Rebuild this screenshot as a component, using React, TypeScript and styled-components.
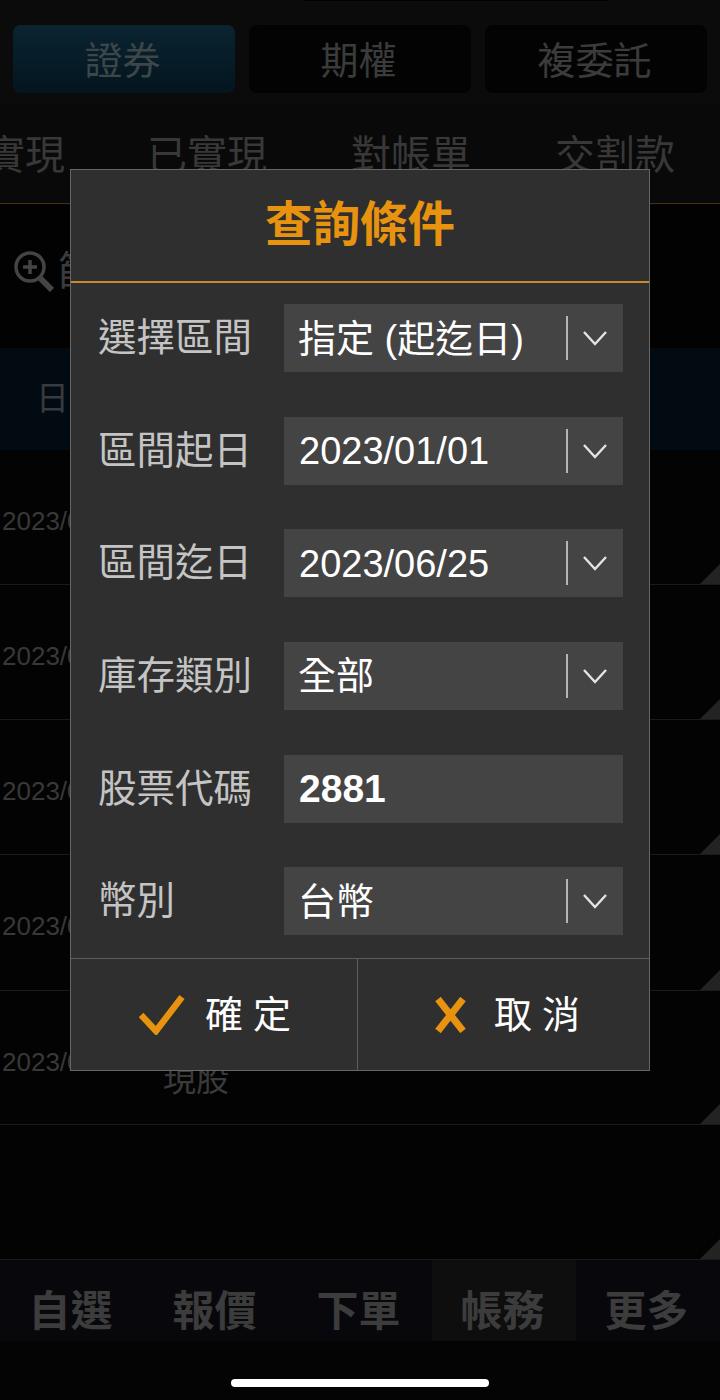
import React from "react";
import styled, { createGlobalStyle } from "styled-components";

const cjk = `"Liberation Sans", "Noto Sans CJK TC", sans-serif`;

const GlobalStyle = createGlobalStyle`
  html, body {
    margin: 0;
    padding: 0;
    background: #050505;
  }
  * { box-sizing: border-box; }
`;

const Page = styled.div`
  position: relative;
  width: 720px;
  height: 1400px;
  overflow: hidden;
  background: #040405;
  font-family: ${cjk};
`;

const TopBar = styled.div`
  height: 105px;
  background: #0b0b0b;
  padding: 25px 13px 0;
  display: grid;
  grid-template-columns: repeat(3, 222px);
  column-gap: 14px;
  align-items: start;
`;

const Notch = styled.div`
  position: absolute;
  top: 0;
  left: 303px;
  width: 305px;
  height: 1px;
  background: #020202;
`;

const Segment = styled.div<{ $active?: boolean }>`
  height: 68px;
  border-radius: 8px;
  padding-right: 3px;
  background: ${(p) => (p.$active ? "linear-gradient(#0a2431, #03151f)" : "#030303")};
  color: ${(p) => (p.$active ? "#3d4649" : "#3b3b3b")};
  font-size: 38px;
  line-height: 72px;
  text-align: center;
`;

const SubTabs = styled.div`
  height: 99px;
  background: #090909;
  border-bottom: 1px solid #46300f;
  display: flex;
  gap: 84px;
  overflow: hidden;
  white-space: nowrap;
`;

const SubTab = styled.div<{ $first?: boolean }>`
  color: #383838;
  font-size: 40px;
  line-height: 100px;
  flex: none;
  margin-left: ${(p) => (p.$first ? "-15px" : "0")};
  margin-right: ${(p) => (p.$first ? "-2px" : "0")};
`;

const SearchRow = styled.div`
  height: 144px;
  background: #020202;
  display: flex;
  align-items: flex-start;
  padding: 46px 0 0 14px;
  gap: 4px;
  color: #3b3b3b;
  font-size: 40px;
  line-height: 42px;
`;

const TableHead = styled.div`
  height: 102px;
  background: #020b12;
  color: #363b3f;
  font-size: 33px;
  line-height: 102px;
  padding-left: 36px;
`;

const Row = styled.div<{ $h?: number }>`
  position: relative;
  height: ${(p) => p.$h ?? 135}px;
  background: #030303;
  border-bottom: 1px solid #1a1a1a;
  display: grid;
  grid-template-columns: 161px 1fr;
  padding: 55px 0 0 2px;
  &::after {
    content: "";
    position: absolute;
    right: 0;
    bottom: 0;
    width: 20px;
    height: 20px;
    background: #232323;
    clip-path: polygon(100% 0, 100% 100%, 0 100%);
  }
`;

const DateCell = styled.div`
  color: #383838;
  font-size: 26px;
  line-height: 32px;
`;

const KindCell = styled.div`
  color: #3a3a3a;
  font-size: 33px;
  line-height: 36px;
  padding-top: 16px;
`;

const BottomNav = styled.div`
  height: 81px;
  background: #08080c;
  display: grid;
  grid-template-columns: repeat(5, 144px);
`;

const NavItem = styled.div<{ $active?: boolean }>`
  background: ${(p) => (p.$active ? "#0e0e0f" : "transparent")};
  color: #3c3c3c;
  font-size: 42px;
  font-weight: 700;
  line-height: 104px;
  height: 81px;
  padding-right: 3px;
  text-align: center;
  white-space: nowrap;
`;

const HomeBar = styled.div`
  position: absolute;
  left: 231px;
  top: 1379px;
  width: 258px;
  height: 8px;
  border-radius: 4px;
  background: #ffffff;
`;

const Dialog = styled.div`
  position: absolute;
  left: 70px;
  top: 169px;
  width: 580px;
  height: 902px;
  background: #2f2f2f;
  border: 1.5px solid #666666;
  display: flex;
  flex-direction: column;
`;

const DialogTitle = styled.div`
  height: 113px;
  flex: none;
  border-bottom: 2px solid #c98a2c;
  color: #e8930f;
  font-size: 47.5px;
  font-weight: 700;
  line-height: 110px;
  text-align: center;
`;

const Form = styled.div`
  flex: 1;
  padding: 21.2px 26px 0 27px;
  display: grid;
  grid-auto-rows: 68px;
  row-gap: 44.6px;
`;

const FormRow = styled.div`
  display: grid;
  grid-template-columns: 186px 339px;
  align-items: center;
`;

const Label = styled.div`
  color: #c4c4c4;
  font-size: 38.5px;
  line-height: 68px;
  white-space: nowrap;
`;

const Field = styled.div`
  height: 68px;
  background: #444444;
  display: flex;
  align-items: center;
  padding-left: 15px;
  color: #ffffff;
  font-size: 38px;
`;

const FieldValue = styled.div<{ $bold?: boolean; $shift: number }>`
  flex: 1;
  margin-top: ${(p) => p.$shift}px;
  margin-left: ${(p) => (p.$shift < 0 ? -1 : 0)}px;
  font-weight: ${(p) => (p.$bold ? 700 : 400)};
  font-size: ${(p) => (p.$bold ? 39 : 38)}px;
  white-space: nowrap;
`;

const Caret = styled.div`
  width: 57px;
  height: 44px;
  flex: none;
  border-left: 2px solid #b5b5b5;
  padding-right: 2px;
  display: flex;
  align-items: center;
  justify-content: center;
`;

const Footer = styled.div`
  height: 112px;
  flex: none;
  border-top: 1.5px solid #5c5c5c;
  display: grid;
  grid-template-columns: 287px 1fr;
`;

const FooterButton = styled.div<{ $divider?: boolean; $gap: number; $shift: number }>`
  display: flex;
  align-items: center;
  justify-content: center;
  gap: ${(p) => p.$gap}px;
  padding-left: ${(p) => p.$shift}px;
  border-right: ${(p) => (p.$divider ? "1.5px solid #5c5c5c" : "none")};
  color: #ffffff;
  font-size: 38px;
  letter-spacing: 10px;
  line-height: 1;
`;

const ChevronDown = () => (
  <svg width="26" height="16" viewBox="0 0 26 16" fill="none">
    <path d="M2 2 L13 14 L24 2" stroke="#e4e4e4" strokeWidth="2.4" />
  </svg>
);

const ZoomPlus = () => (
  <svg width="40" height="42" viewBox="0 0 40 42" fill="none" stroke="#444444">
    <circle cx="16" cy="17" r="14" strokeWidth="3.5" />
    <path d="M26 28 L38 40" strokeWidth="6" />
    <path d="M9 17 H23 M16 10 V24" strokeWidth="3.5" />
  </svg>
);

const fields = [
  { label: "選擇區間", value: "指定 (起迄日)", shift: -6 },
  { label: "區間起日", value: "2023/01/01", shift: 2 },
  { label: "區間迄日", value: "2023/06/25", shift: 2 },
  { label: "庫存類別", value: "全部", shift: -6 },
  { label: "股票代碼", value: "2881", shift: 0, input: true },
  { label: "幣別", value: "台幣", shift: -6 },
];

export default function App() {
  return (
    <Page>
      <GlobalStyle />
      <Notch />
      <TopBar>
        <Segment $active>證券</Segment>
        <Segment>期權</Segment>
        <Segment>複委託</Segment>
      </TopBar>
      <SubTabs>
        <SubTab $first>實現</SubTab>
        <SubTab>已實現</SubTab>
        <SubTab>對帳單</SubTab>
        <SubTab>交割款</SubTab>
      </SubTabs>
      <SearchRow>
        <ZoomPlus />
        <span>篩選</span>
      </SearchRow>
      <TableHead>日期</TableHead>
      <Row>
        <DateCell>2023/01/01</DateCell>
      </Row>
      <Row>
        <DateCell>2023/01/01</DateCell>
      </Row>
      <Row>
        <DateCell>2023/01/01</DateCell>
      </Row>
      <Row $h={136}>
        <DateCell>2023/01/01</DateCell>
      </Row>
      <Row $h={134}>
        <DateCell>2023/01/01</DateCell>
        <KindCell>現股</KindCell>
      </Row>
      <Row />
      <BottomNav>
        <NavItem>自選</NavItem>
        <NavItem>報價</NavItem>
        <NavItem>下單</NavItem>
        <NavItem $active>帳務</NavItem>
        <NavItem>更多</NavItem>
      </BottomNav>
      <HomeBar />

      <Dialog>
        <DialogTitle>查詢條件</DialogTitle>
        <Form>
          {fields.map((f) => (
            <FormRow key={f.label}>
              <Label>{f.label}</Label>
              <Field>
                <FieldValue $bold={f.input} $shift={f.shift}>{f.value}</FieldValue>
                {!f.input && (
                  <Caret>
                    <ChevronDown />
                  </Caret>
                )}
              </Field>
            </FormRow>
          ))}
        </Form>
        <Footer>
          <FooterButton $divider $gap={20} $shift={12}>
            <svg width="46" height="40" viewBox="0 0 46 40" fill="none">
              <path d="M2 20 L17 36 L43 2" stroke="#e8930f" strokeWidth="6.5" />
            </svg>
            <span>確定</span>
          </FooterButton>
          <FooterButton $gap={28} $shift={18}>
            <svg width="31" height="36" viewBox="0 0 31 36" fill="none">
              <path d="M3 2 L28 34 M28 2 L3 34" stroke="#e8930f" strokeWidth="7" />
            </svg>
            <span>取消</span>
          </FooterButton>
        </Footer>
      </Dialog>
    </Page>
  );
}
